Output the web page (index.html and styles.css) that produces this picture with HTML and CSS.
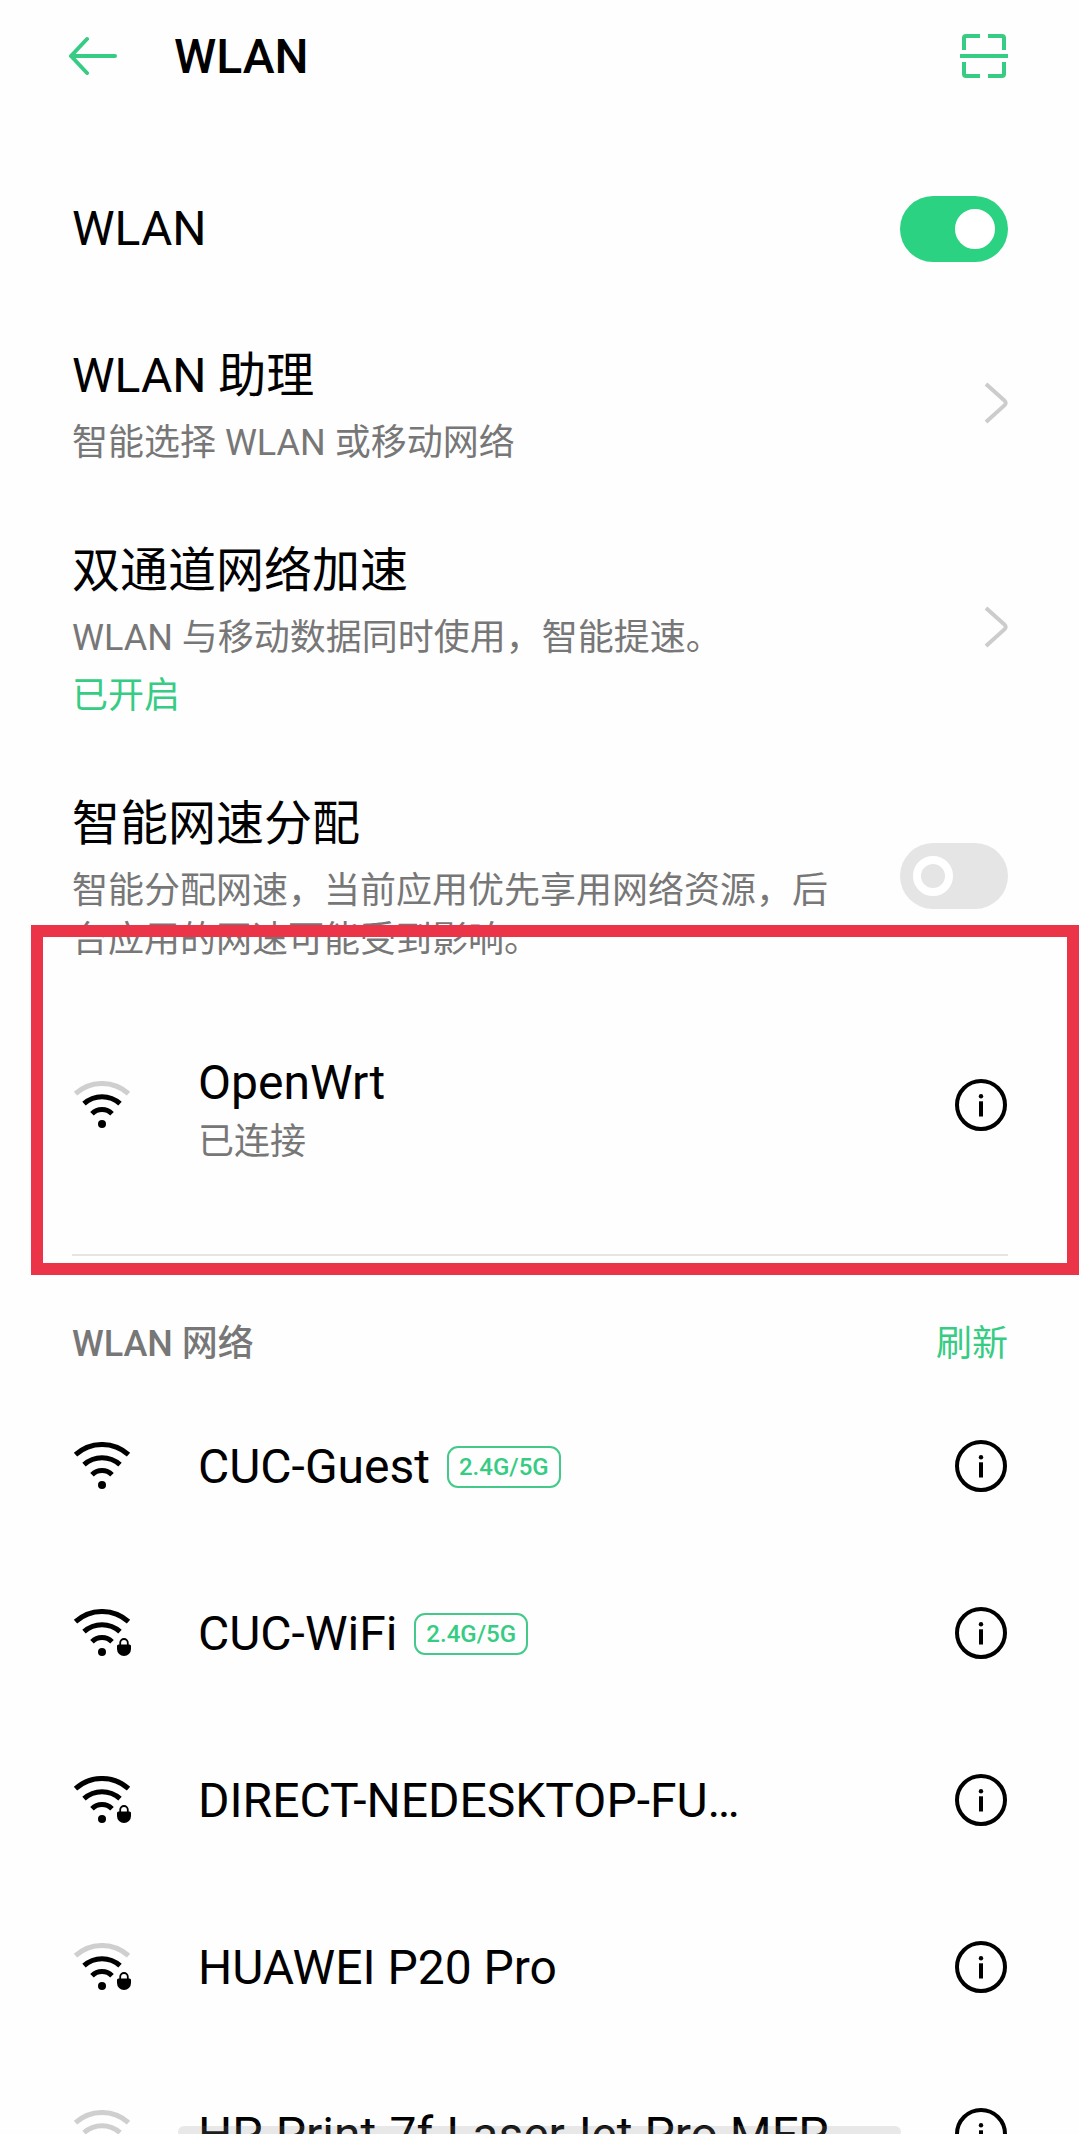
FILE: index.html
```html
<!DOCTYPE html>
<html lang="zh-CN">
<head>
  <meta charset="utf-8">
  <meta name="viewport" content="width=device-width, initial-scale=1">
  <title>WLAN</title>
  <link rel="stylesheet" href="styles.css">
</head>
<body>
  <svg class="sprite" aria-hidden="true">
    <symbol id="arc-outer" viewBox="0 0 60 47"><path d="M3.5 12.7A39.5 39.5 0 0 1 56.5 12.7"/></symbol>
    <symbol id="wifi-inner" viewBox="0 0 60 47">
      <path d="M12 22.7A26.6 26.6 0 0 1 48 22.7M20 32.8A14 14 0 0 1 40 32.8"/>
      <circle cx="30" cy="43" r="4" fill="#000" stroke="none"/>
    </symbol>
    <symbol id="lock" viewBox="0 0 60 47">
      <path d="M48.2 37v-3.2a3.8 3.8 0 0 1 7.6 0V37" stroke-width="1.8"/>
      <path d="M46.5 35.5h11q1.5 0 1.5 1.5v3a7 7 0 0 1-14 0v-3q0-1.5 1.5-1.5z" fill="#000" stroke="none"/>
    </symbol>
    <symbol id="info" viewBox="0 0 52 52">
      <circle cx="26" cy="26" r="24" fill="none" stroke="#000" stroke-width="4"/>
      <circle cx="26" cy="17.3" r="2.2"/>
      <path d="M24 22.3h4v15.2h-4z"/>
    </symbol>
    <symbol id="chevron" viewBox="0 0 24 42">
      <path d="M2 2l18.4 16.6q2.6 2.4 0 4.8L2 40" fill="none" stroke="#ccc" stroke-width="4"/>
    </symbol>
  </svg>

  <div class="screen">
    <header class="topbar">
      <button class="icon-button" type="button" aria-label="返回">
        <svg class="icon-back" viewBox="0 0 48 40"><path d="M2 20h44M18 3L2 20l16 17"/></svg>
      </button>
      <h1 class="topbar-title">WLAN</h1>
      <button class="icon-button" type="button" aria-label="扫一扫">
        <svg class="icon-scan" viewBox="0 0 48 46"><path d="M4 17V5q0-2 2-2h14M28 3h14q2 0 2 2v12M44 29v12q0 2-2 2H28M20 43H6q-2 0-2-2V29M0 23h48"/></svg>
      </button>
    </header>

    <main class="content">
      <div class="row">
        <label class="row-title row-text" for="wlan">WLAN</label>
        <input class="switch" type="checkbox" role="switch" id="wlan" checked>
      </div>
      <a class="row" href="#assistant">
        <span class="row-text">
          <span class="row-title">WLAN 助理</span>
          <span class="row-note">智能选择 WLAN 或移动网络</span>
        </span>
        <svg class="chevron"><use href="#chevron"/></svg>
      </a>
      <a class="row" href="#dual-channel">
        <span class="row-text">
          <span class="row-title">双通道网络加速</span>
          <span class="row-note">WLAN 与移动数据同时使用，智能提速。</span>
          <span class="row-state">已开启</span>
        </span>
        <svg class="chevron"><use href="#chevron"/></svg>
      </a>
      <div class="row">
        <label class="row-text" for="allocation">
          <span class="row-title">智能网速分配</span>
          <span class="row-note">智能分配网速，当前应用优先享用网络资源，后台应用的网速可能受到影响。</span>
        </label>
        <input class="switch" type="checkbox" role="switch" id="allocation">
      </div>

      <section class="connected">
        <div class="network">
          <svg class="wifi" viewBox="0 0 60 47"><use class="weak" href="#arc-outer"/><use href="#wifi-inner"/></svg>
          <div class="network-text">
            <span class="network-name">OpenWrt</span>
            <span class="network-note">已连接</span>
          </div>
          <button class="icon-button" type="button" aria-label="OpenWrt 详情"><svg class="info"><use href="#info"/></svg></button>
        </div>
      </section>

      <section>
        <div class="section-head">
          <h2 class="section-title">WLAN 网络</h2>
          <button class="refresh" type="button">刷新</button>
        </div>
        <ul class="networks">
          <li class="network">
            <svg class="wifi" viewBox="0 0 60 47"><use href="#arc-outer"/><use href="#wifi-inner"/></svg>
            <div class="network-text network-line"><span class="network-name">CUC-Guest</span><span class="badge">2.4G/5G</span></div>
            <button class="icon-button" type="button" aria-label="CUC-Guest 详情"><svg class="info"><use href="#info"/></svg></button>
          </li>
          <li class="network">
            <svg class="wifi" viewBox="0 0 60 47"><use href="#arc-outer"/><use href="#wifi-inner"/><use href="#lock"/></svg>
            <div class="network-text network-line"><span class="network-name">CUC-WiFi</span><span class="badge">2.4G/5G</span></div>
            <button class="icon-button" type="button" aria-label="CUC-WiFi 详情"><svg class="info"><use href="#info"/></svg></button>
          </li>
          <li class="network">
            <svg class="wifi" viewBox="0 0 60 47"><use href="#arc-outer"/><use href="#wifi-inner"/><use href="#lock"/></svg>
            <div class="network-text network-line"><span class="network-name">DIRECT-NEDESKTOP-FU…</span></div>
            <button class="icon-button" type="button" aria-label="DIRECT-NEDESKTOP-FU 详情"><svg class="info"><use href="#info"/></svg></button>
          </li>
          <li class="network">
            <svg class="wifi" viewBox="0 0 60 47"><use class="weak" href="#arc-outer"/><use href="#wifi-inner"/><use href="#lock"/></svg>
            <div class="network-text network-line"><span class="network-name">HUAWEI P20 Pro</span></div>
            <button class="icon-button" type="button" aria-label="HUAWEI P20 Pro 详情"><svg class="info"><use href="#info"/></svg></button>
          </li>
          <li class="network">
            <svg class="wifi" viewBox="0 0 60 47"><use class="weak" href="#arc-outer"/><use class="weak" href="#wifi-inner"/><use href="#lock"/></svg>
            <div class="network-text network-line"><span class="network-name">HP-Print-7f-LaserJet Pro MFP</span></div>
            <button class="icon-button" type="button" aria-label="HP-Print-7f 详情"><svg class="info"><use href="#info"/></svg></button>
          </li>
        </ul>
      </section>
    </main>
    <div class="gesture-bar"></div>
  </div>
</body>
</html>
```
FILE: styles.css
```css
*,
*::before,
*::after {
  box-sizing: border-box;
}

body {
  margin: 0;
  background: #fefefe;
  color: #000;
  font-family: Roboto, "Noto Sans CJK SC", sans-serif;
  font-size: 36px;
}

.sprite {
  display: none;
}

.screen {
  display: flex;
  flex-direction: column;
  height: 100vh;
  overflow: hidden;
}

/* Top bar */

.topbar {
  display: flex;
  align-items: center;
  flex: none;
  height: 112px;
  padding: 0 71px 0 69px;
}

.topbar-title {
  flex: 1;
  margin: 0;
  padding-left: 57px;
  font-size: 48px;
  font-weight: 500;
}

.icon-button {
  display: flex;
  flex: none;
  padding: 0;
  border: 0;
  background: none;
}

.icon-back,
.icon-scan {
  width: 48px;
  height: 46px;
  fill: none;
  stroke: #36cc83;
  stroke-width: 4;
}

.icon-back {
  stroke-linecap: round;
  stroke-linejoin: round;
}

/* Settings rows */

.content {
  flex: 1;
  min-height: 0;
  padding-top: 38px;
  overflow-y: auto;
  scrollbar-width: none;
}

.row {
  display: flex;
  align-items: center;
  gap: 60px;
  min-height: 154px;
  padding: 34px 71px 31px 72px;
  color: inherit;
  text-decoration: none;
}

.row-text {
  display: flex;
  flex: 1;
  flex-direction: column;
}

.row-title {
  font-size: 48px;
  line-height: 75px;
}

.row-note {
  margin-top: 6px;
  color: #777;
  line-height: 49px;
}

.row-state {
  margin-top: 9px;
  color: #36cc83;
  line-height: 49px;
}

.chevron {
  flex: none;
  width: 24px;
  height: 42px;
}

.switch {
  display: flex;
  align-items: center;
  flex: none;
  width: 108px;
  height: 66px;
  margin: 0;
  padding: 0 13px;
  border-radius: 33px;
  background: #e5e5e5;
  appearance: none;
}

.switch::before {
  content: "";
  width: 40px;
  height: 40px;
  border: 8px solid #fff;
  border-radius: 50%;
}

.switch:checked {
  justify-content: flex-end;
  background: #2bd281;
}

.switch:checked::before {
  background: #fff;
}

/* Networks */

.connected {
  position: relative;
  margin-top: 25px;
  padding-bottom: 68px;
}

.connected::before {
  content: "";
  position: absolute;
  right: 71px;
  bottom: 0;
  left: 72px;
  height: 2px;
  background: #e5e5e5;
}

.connected::after {
  content: "";
  position: absolute;
  inset: -96px 0 -19px 31px;
  border: 12px solid #eb3447;
  pointer-events: none;
}

.network {
  display: flex;
  align-items: center;
  height: 167px;
  padding: 0 72px;
}

.network-text {
  display: flex;
  flex: 1;
  flex-direction: column;
  min-width: 0;
  padding: 3px 0 0 66px;
}

.network-line {
  flex-direction: row;
  align-items: center;
  gap: 17px;
}

.network-name {
  font-size: 48px;
  line-height: 72px;
  white-space: nowrap;
}

.network-note {
  color: #777;
  line-height: 46px;
}

.networks {
  margin: 0;
  padding: 0;
  list-style: none;
}

.wifi {
  flex: none;
  width: 60px;
  height: 47px;
  fill: none;
  stroke: #000;
  stroke-width: 5;
}

.weak {
  opacity: 0.18;
}

.info {
  width: 52px;
  height: 52px;
}

.badge {
  padding: 0 10px;
  border: 2px solid #45c98a;
  border-radius: 11px;
  color: #36cc83;
  font-size: 24px;
  font-weight: 500;
  line-height: 38px;
}

.section-head {
  display: flex;
  align-items: center;
  justify-content: space-between;
  height: 126px;
  padding: 42px 71px 0 72px;
}

.section-title {
  margin: 0;
  color: #777;
  font-size: 36px;
  font-weight: 500;
}

.refresh {
  padding: 0;
  border: 0;
  background: none;
  color: #36cc83;
  font: inherit;
}

/* System gesture bar */

.gesture-bar {
  position: fixed;
  right: 178px;
  bottom: -4px;
  left: 178px;
  height: 12px;
  border-radius: 6px;
  background: rgba(147, 147, 147, 0.2);
}
```
